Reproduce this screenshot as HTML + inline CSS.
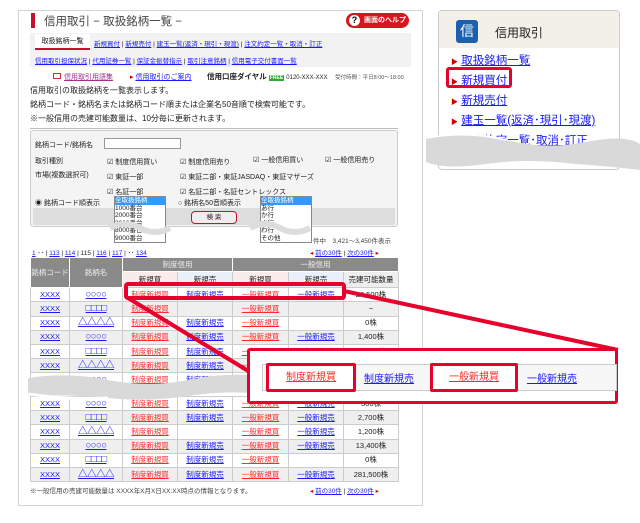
<!DOCTYPE html>
<html><head><meta charset="utf-8"><style>
*{margin:0;padding:0;box-sizing:border-box}
body{width:640px;height:523px;background:#fff;position:relative;overflow:hidden;font-family:"Liberation Sans","Noto Sans CJK JP",sans-serif;color:#222;font-size:8px}
.a{position:absolute;white-space:nowrap}
.l{color:#1a1aff;text-decoration:underline}
.r{color:#ff2a2a;text-decoration:underline}
table{position:absolute;border-collapse:collapse;table-layout:fixed;font-size:7.5px}
td{border:1px solid #ccc;text-align:center;height:14.2px;padding:0;white-space:nowrap;overflow:hidden;line-height:12px}
tr.g td{background:#efefef}
.sq{font-weight:bold;font-size:9.5px;letter-spacing:-0.5px}
</style></head><body>
<div class="a" style="left:18px;top:10px;width:405px;height:496px;border:1px solid #d4d4d4"></div>
<div class="a" style="left:31px;top:13px;width:4px;height:15px;background:#c8102e"></div>
<div class="a" style="left:44px;top:13px;font-size:11.5px;color:#444">信用取引 − 取扱銘柄一覧 −</div>
<div class="a" style="left:346px;top:13px;width:63px;height:15px;border-radius:8px;background:#d8141e;color:#fff;font-size:7px;font-weight:bold;line-height:15px;padding-left:18px">画面のヘルプ</div>
<div class="a" style="left:349px;top:15px;width:11px;height:11px;border-radius:50%;background:#fff;color:#000;font-size:9px;font-weight:bold;text-align:center;line-height:11px">?</div>
<div class="a" style="left:30px;top:33px;width:381px;height:34px;background:#f2f2f2"></div>
<div class="a" style="left:35px;top:34px;width:55px;height:16px;background:#fff;border-bottom:2px solid #c8102e;font-size:7px;text-align:center;line-height:15px">取扱銘柄一覧</div>
<div class="a" style="left:94px;top:38px;font-size:6.5px"><span class="l">新規買付</span> | <span class="l">新規売付</span> | <span class="l">建玉一覧(返済・現引・現渡)</span> | <span class="l">注文約定一覧・取消・訂正</span></div>
<div class="a" style="left:35px;top:55px;font-size:6.5px"><span class="l">信用取引担保状況</span> | <span class="l">代用証券一覧</span> | <span class="l">保証金振替指示</span> | <span class="l">取引注意銘柄</span> | <span class="l">信用電子交付書面一覧</span></div>
<div class="a" style="left:53px;top:72px;font-size:7px"><span style="display:inline-block;width:8px;height:6px;border:1px solid #c33;margin-right:3px"></span><span class="l" style="color:#a03090">信用取引用語集</span></div>
<div class="a" style="left:130px;top:72px;font-size:7px"><span style="color:#c00">▸</span> <span class="l">信用取引のご案内</span></div>
<div class="a" style="left:207px;top:71px;font-size:7.5px;font-weight:bold">信用口座ダイヤル <span style="background:#3a3;color:#fff;font-size:5px;padding:0 1px">FREE</span> <span style="font-weight:normal;font-size:6px">0120-XXX-XXX</span>　<span style="font-weight:normal;font-size:5.5px;color:#555">受付時間：平日8:00〜18:00</span></div>
<div class="a" style="left:30px;top:84px;font-size:8px;line-height:14px">信用取引の取扱銘柄を一覧表示します。<br>銘柄コード・銘柄名または銘柄コード順または企業名50音順で検索可能です。<br>※一般信用の売建可能数量は、10分毎に更新されます。</div>
<div class="a" style="left:30px;top:128px;width:368px;border-top:1px solid #bbb"></div>
<div class="a" style="left:30px;top:130px;width:368px;height:97px;border:1px solid #ccc;border-radius:3px;background:#f4f4f4"></div>
<div class="a" style="left:33px;top:208px;width:362px;height:17px;background:#ddd"></div>
<div class="a" style="left:35px;top:140px;font-size:7px">銘柄コード/銘柄名</div>
<div class="a" style="left:104px;top:138px;width:77px;height:11px;background:#fff;border:1px solid #999"></div>
<div class="a" style="left:35px;top:156px;font-size:7px">取引種別</div>
<div class="a" style="left:35px;top:170px;font-size:7px">市場(複数選択可)</div>
<div class="a" style="left:107px;top:155px;font-size:7px;line-height:15px">☑ 制度信用買い<br>☑ 東証一部<br>☑ 名証一部</div>
<div class="a" style="left:180px;top:155px;font-size:7px;line-height:15px">☑ 制度信用売り<br>☑ 東証二部・東証JASDAQ・東証マザーズ<br>☑ 名証二部・名証セントレックス</div>
<div class="a" style="left:253px;top:155px;font-size:7px">☑ 一般信用買い</div>
<div class="a" style="left:325px;top:155px;font-size:7px">☑ 一般信用売り</div>
<div class="a" style="left:35px;top:198px;font-size:7px">◉ 銘柄コード順表示</div>
<div class="a" style="left:178px;top:198px;font-size:7px">○ 銘柄名50音順表示</div>
<div class="a" style="left:191px;top:211px;width:46px;height:13px;border:1px solid #c8102e;border-radius:4px;background:#eee;font-size:6.5px;text-align:center;line-height:11px">検 索</div>
<div class="a" style="left:114px;top:196px;width:52px;height:47px;background:#fff;border:1px solid #888;font-size:6.5px;line-height:7.5px"><div style="background:#39f;color:#fff">全取扱銘柄</div>1000番台<br>2000番台<br>3000番台<br>8000番台<br>9000番台</div>
<div class="a" style="left:260px;top:196px;width:52px;height:47px;background:#fff;border:1px solid #888;font-size:6.5px;line-height:7.5px"><div style="background:#39f;color:#fff">全取扱銘柄</div>あ行<br>か行<br>さ行<br>わ行<br>その他</div>
<svg class="a" style="left:100px;top:220px" width="230" height="20"><path d="M10 8 Q25 0 40 8 T70 8 M150 8 Q165 0 180 8 T210 8" stroke="#ddd" stroke-width="6" fill="none"/></svg>
<div class="a" style="left:313px;top:235px;font-size:6.5px;color:#444">件中　3,421〜3,450件表示</div>
<div class="a" style="left:32px;top:247px;font-size:6.5px"><span class="l">1</span> ･･ | <span class="l">113</span> | <span class="l">114</span> | 115 | <span class="l">116</span> | <span class="l">117</span> | ･･ <span class="l">134</span></div>
<div class="a" style="left:310px;top:247px;font-size:6.5px"><span style="color:#c00">◂</span> <span class="l">前の30件</span> | <span class="l">次の30件</span> <span style="color:#c00">▸</span></div>
<table style="left:30px;top:257px;width:368px">
<colgroup><col style="width:39px"><col style="width:53px"><col style="width:55px"><col style="width:55px"><col style="width:56px"><col style="width:55px"><col style="width:55px"></colgroup>
<tr style="background:#8a8a8a;color:#eee"><td rowspan="2" style="border-color:#fff">銘柄コード</td><td rowspan="2" style="border-color:#fff">銘柄名</td><td colspan="2" style="border-color:#fff">制度信用</td><td colspan="3" style="border-color:#fff">一般信用</td></tr>
<tr><td style="background:#fbecec;height:16px;color:#222">新規買</td><td style="background:#eaf0fa">新規売</td><td style="background:#fbecec">新規買</td><td style="background:#eaf0fa">新規売</td><td style="background:#eee">売建可能数量</td></tr>
<tr><td class="l">XXXX</td><td class="l sq">○○○○</td><td class="r">制度新規買</td><td class="l">制度新規売</td><td class="r">一般新規買</td><td class="l">一般新規売</td><td>26,500株</td></tr>
<tr class="g"><td class="l">XXXX</td><td class="l sq">□□□□</td><td class="r">制度新規買</td><td></td><td class="r">一般新規買</td><td></td><td>−</td></tr>
<tr><td class="l">XXXX</td><td class="l sq">△△△△</td><td class="r">制度新規買</td><td class="l">制度新規売</td><td class="r">一般新規買</td><td></td><td>0株</td></tr>
<tr class="g"><td class="l">XXXX</td><td class="l sq">○○○○</td><td class="r">制度新規買</td><td class="l">制度新規売</td><td class="r">一般新規買</td><td class="l">一般新規売</td><td>1,400株</td></tr>
<tr><td class="l">XXXX</td><td class="l sq">□□□□</td><td class="r">制度新規買</td><td class="l">制度新規売</td><td class="r">一般新規買</td><td class="l">一般新規売</td><td>22,000株</td></tr>
<tr class="g"><td class="l">XXXX</td><td class="l sq">△△△△</td><td class="r">制度新規買</td><td class="l">制度新規売</td><td class="r">一般新規買</td><td class="l">一般新規売</td><td>5,000株</td></tr>
<tr><td class="l">XXXX</td><td class="l sq">○○○○</td><td class="r">制度新規買</td><td class="l">制度新規売</td><td class="r">一般新規買</td><td class="l">一般新規売</td><td>100株</td></tr>
</table>
<table style="left:30px;top:396px;width:368px">
<colgroup><col style="width:39px"><col style="width:53px"><col style="width:55px"><col style="width:55px"><col style="width:56px"><col style="width:55px"><col style="width:55px"></colgroup>
<tr><td class="l">XXXX</td><td class="l sq">○○○○</td><td class="r">制度新規買</td><td class="l">制度新規売</td><td class="r">一般新規買</td><td class="l">一般新規売</td><td>300株</td></tr>
<tr class="g"><td class="l">XXXX</td><td class="l sq">□□□□</td><td class="r">制度新規買</td><td class="l">制度新規売</td><td class="r">一般新規買</td><td class="l">一般新規売</td><td>2,700株</td></tr>
<tr><td class="l">XXXX</td><td class="l sq">△△△△</td><td class="r">制度新規買</td><td></td><td class="r">一般新規買</td><td class="l">一般新規売</td><td>1,200株</td></tr>
<tr class="g"><td class="l">XXXX</td><td class="l sq">○○○○</td><td class="r">制度新規買</td><td class="l">制度新規売</td><td class="r">一般新規買</td><td class="l">一般新規売</td><td>13,400株</td></tr>
<tr><td class="l">XXXX</td><td class="l sq">□□□□</td><td class="r">制度新規買</td><td class="l">制度新規売</td><td class="r">一般新規買</td><td></td><td>0株</td></tr>
<tr class="g"><td class="l">XXXX</td><td class="l sq">△△△△</td><td class="r">制度新規買</td><td class="l">制度新規売</td><td class="r">一般新規買</td><td class="l">一般新規売</td><td>281,500株</td></tr>
</table>
<svg class="a" style="left:28px;top:372px" width="230" height="32"><path d="M0 6 Q40 0 80 8 T160 8 T230 4 L230 22 Q200 18 160 24 T80 26 T0 24 Z" fill="#d9d9d9"/><path d="M0 22 Q40 28 80 26" stroke="#fff" stroke-width="3" fill="none"/></svg>
<div class="a" style="left:30px;top:485px;font-size:6.5px;color:#444">※一般信用の売建可能数量は XXXX年X月X日XX:XX時点の情報となります。</div>
<div class="a" style="left:310px;top:485px;font-size:6.5px"><span style="color:#c00">◂</span> <span class="l">前の30件</span> | <span class="l">次の30件</span> <span style="color:#c00">▸</span></div>
<svg class="a" style="left:0;top:0" width="640" height="523"><g stroke="#e8002d" stroke-width="4" fill="none"><rect x="126" y="284" width="218" height="14" rx="2"/><line x1="128" y1="298" x2="250" y2="372"/><line x1="344" y1="291" x2="618" y2="350"/></g></svg>
<div class="a" style="left:247px;top:348px;width:371px;height:56px;background:#fff;border:3px solid #e8002d;border-radius:3px"></div>
<div class="a" style="left:262px;top:364px;width:355px;height:27px;border:1px solid #ccc;background:#f7f7f7"></div>
<div class="a" style="left:266px;top:363px;width:90px;height:29px;border:3px solid #e8002d;border-radius:2px;background:#fff;font-size:10px;text-align:center;line-height:23px"><span class="r">制度新規買</span></div>
<div class="a" style="left:364px;top:370px;font-size:10px" ><span class="l">制度新規売</span></div>
<div class="a" style="left:430px;top:363px;width:88px;height:29px;border:3px solid #e8002d;border-radius:2px;background:#fff;font-size:10px;text-align:center;line-height:23px"><span class="r">一般新規買</span></div>
<div class="a" style="left:527px;top:370px;font-size:10px"><span class="l">一般新規売</span></div>
<div class="a" style="left:438px;top:10px;width:182px;height:160px;border:1px solid #ccc;border-radius:4px"></div>
<div class="a" style="left:439px;top:11px;width:180px;height:37px;background:#f3f0ea;border-radius:4px 4px 0 0"></div>
<div class="a" style="left:456px;top:20px;width:22px;height:23px;border-radius:3px;background:#1b5fb0;color:#fff;font-size:14px;text-align:center;line-height:23px">信</div>
<div class="a" style="left:495px;top:24px;font-size:12px;color:#222">信用取引</div>
<div class="a" style="left:451px;top:52px;font-size:11.5px;line-height:18px;color:#1a1aff">
<div><span style="color:#c00;font-size:7px">▶</span> <span class="l">取扱銘柄一覧</span></div>
<div><span style="color:#c00;font-size:7px">▶</span> <span class="l">新規買付</span></div>
<div><span style="color:#c00;font-size:7px">▶</span> <span class="l">新規売付</span></div>
<div><span style="color:#c00;font-size:7px">▶</span> <span class="l">建玉一覧(返済･現引･現渡)</span></div>
<div><span style="color:#c00;font-size:7px">▶</span> <span class="l">注文約定一覧･取消･訂正</span></div>
</div>
<div class="a" style="left:446px;top:67px;width:66px;height:21px;border:3px solid #e8002d;border-radius:3px"></div>
<svg class="a" style="left:426px;top:130px" width="214" height="45"><path d="M0 8 Q40 0 80 10 T160 12 T214 14 L214 40 Q180 36 150 34 Q100 28 60 34 T0 32 Z" fill="#d9d9d9"/><path d="M0 8 Q40 0 80 10" stroke="#fff" stroke-width="2" fill="none"/></svg>
</body></html>
